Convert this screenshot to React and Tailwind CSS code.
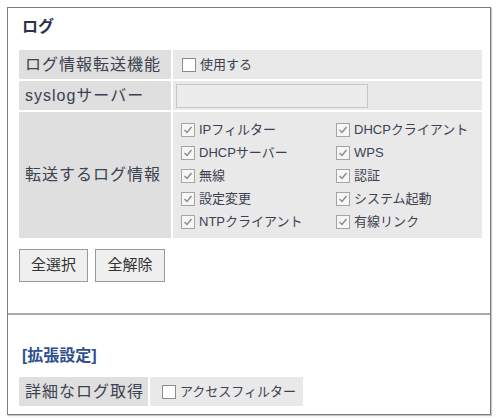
import React from 'react'

const FONT = { fontFamily: '"Liberation Sans", "Noto Sans CJK JP", sans-serif' }

const logItems = [
  ['IPフィルター', 'DHCPクライアント'],
  ['DHCPサーバー', 'WPS'],
  ['無線', '認証'],
  ['設定変更', 'システム起動'],
  ['NTPクライアント', '有線リンク'],
]

function Box({ checked }) {
  return (
    <span
      className={`inline-flex items-center justify-center w-[14px] h-[14px] border shrink-0 ${
        checked ? 'border-[#a4a4a4] bg-[#f6f6f6]' : 'border-[#8c8c8c] bg-white'
      }`}
    >
      {checked && (
        <svg width="10" height="10" viewBox="0 0 10 10">
          <polyline points="1.5,5 4,7.5 8.5,2" fill="none" stroke="#8a8a8a" strokeWidth="1.4" />
        </svg>
      )}
    </span>
  )
}

function Check({ label, checked }) {
  return (
    <label className="flex items-center gap-[4px] h-[23px] text-[13px] text-[#3b4150]">
      <Box checked={checked} />
      <span>{label}</span>
    </label>
  )
}

export default function App() {
  return (
    <div className="w-[498px] h-[418px] bg-white pt-[7px] pl-[7px]" style={FONT}>
      <div className="w-[484px] h-[408px] border border-[#7c7c7c] shadow-[1px_1px_1px_#c8c8c8]">
        <div className="px-[11px]">
          <h2 className="mt-[8px] pl-[3px] h-[22px] leading-[22px] text-[16px] font-bold text-[#2b3349]">ログ</h2>

          <div className="mt-[12px] w-[463px] grid grid-cols-[152px_1fr] gap-[2px] text-[16px] tracking-[1px] text-[#3c4150]">
            <div className="h-[29px] bg-[#dfdfdf] pl-[6px] flex items-center">ログ情報転送機能</div>
            <div className="h-[29px] bg-[#e9e9e9] pl-[9px] flex items-center tracking-normal">
              <Check label="使用する" checked={false} />
            </div>

            <div className="h-[29px] bg-[#dfdfdf] pl-[6px] flex items-center">syslogサーバー</div>
            <div className="h-[29px] bg-[#e9e9e9] pl-[3px] flex items-center">
              <input
                type="text"
                className="w-[192px] h-[24px] bg-[#ececec] border border-[#c6c6c6] outline-none"
              />
            </div>

            <div className="h-[126px] bg-[#dfdfdf] pl-[6px] flex items-center">転送するログ情報</div>
            <div className="h-[126px] bg-[#e9e9e9] pl-[8px] py-[6px] grid grid-cols-[155px_1fr] tracking-normal">
              {logItems.map(([a, b]) => (
                <React.Fragment key={a}>
                  <Check label={a} checked />
                  <Check label={b} checked />
                </React.Fragment>
              ))}
            </div>
          </div>

          <div className="mt-[11px] flex gap-[7px]">
            <button className="w-[69px] h-[33px] bg-[#efefef] border border-[#9a9a9a] text-[15px] text-[#333]">全選択</button>
            <button className="w-[70px] h-[33px] bg-[#efefef] border border-[#9a9a9a] text-[15px] text-[#333]">全解除</button>
          </div>
        </div>

        <div className="mt-[31px] h-[2px] bg-[#a9a9a9]" />

        <div className="px-[11px]">
          <h3 className="mt-[30px] pl-[3px] h-[22px] leading-[22px] text-[16px] font-bold text-[#2f4f8f]">[拡張設定]</h3>
          <div className="mt-[10px] grid grid-cols-[129px_153px] gap-[2px] text-[16px] tracking-[1px] text-[#3c4150]">
            <div className="h-[29px] bg-[#dfdfdf] pl-[6px] flex items-center">詳細なログ取得</div>
            <div className="h-[29px] bg-[#e9e9e9] pl-[12px] flex items-center tracking-normal">
              <Check label="アクセスフィルター" checked={false} />
            </div>
          </div>
        </div>
      </div>
    </div>
  )
}
